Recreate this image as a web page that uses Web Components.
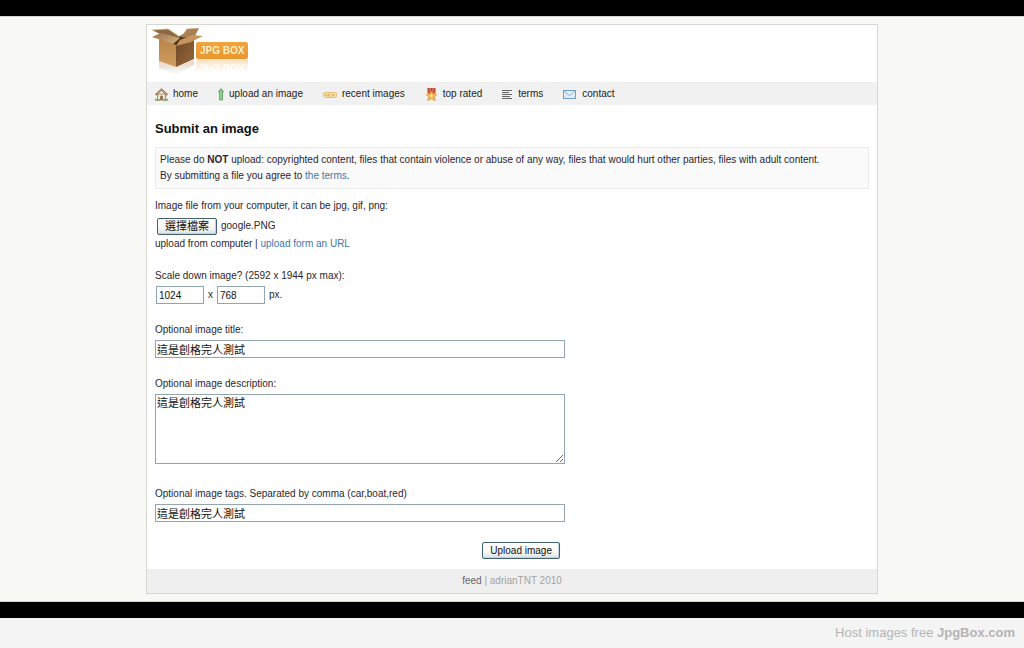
<!DOCTYPE html>
<html lang="en">
<head>
<meta charset="utf-8">
<meta name="viewport" content="width=device-width, initial-scale=1">
<title>Submit an image</title>
<style>
  body {
    margin:0;
    font-family:"Liberation Sans", Arial, "Noto Sans CJK TC", sans-serif;
    font-size:10px;
    line-height:16px;
    color:#2b2630;
    --link:#3b78a8;
    --field-border:#93a5af;
  }
</style>
</head>
<body>
<page-shell>
  <site-card>
    <site-logo slot="header"></site-logo>
    <site-nav slot="nav">
      <nav-item icon="home">home</nav-item>
      <nav-item icon="upload">upload an image</nav-item>
      <nav-item icon="recent">recent images</nav-item>
      <nav-item icon="rated">top rated</nav-item>
      <nav-item icon="terms">terms</nav-item>
      <nav-item icon="contact">contact</nav-item>
    </site-nav>
    <upload-form></upload-form>
    <site-footer slot="footer"></site-footer>
  </site-card>
  <host-credit slot="credit"></host-credit>
</page-shell>

<script>
const ICONS = {
  home: [13, `
    <rect x="2.5" y="6" width="8" height="6" fill="#efe6d2" stroke="#a39272"/>
    <path d="M.6 7L6.5 1.6L12.4 7" fill="none" stroke="#9c7450" stroke-width="2"/>
    <path d="M1.5 6.2L6.5 1.8L11.5 6.2" fill="none" stroke="#d3ab80" stroke-width=".8"/>
    <path d="M5.2 12V8.2Q6.5 6.6 7.8 8.2V12Z" fill="#8a6b48"/>
    <path d="M0 12.2H5M8 12.2H13M1 10.5V12M12 10.5V12" stroke="#7ba465" stroke-width="1.2"/>`],
  upload: [6, `
    <path d="M3 .6L5.7 3.8H4.5V12H1.5V3.8H.3Z" fill="#7cc47a" stroke="#4a9a52" stroke-width=".7"/>
    <path d="M2.8 3.2V11" stroke="#b9e2b4" stroke-width=".7"/>`],
  recent: [14, `
    <rect x=".5" y="4.5" width="13" height="5" rx="1" fill="#fbe8b8" stroke="#e6c07a"/>
    <path d="M2 8.4V5.8L4 8.4V5.8M7.3 5.9H5.4V8.2H7.3M5.4 7H7M8.5 5.6L9.3 8.3L10.2 6.2L11.1 8.3L12 5.6" fill="none" stroke="#dda650" stroke-width=".7"/>`],
  rated: [13, `
    <path d="M2.5 0H10.5V5L6.5 7L2.5 5Z" fill="#b9443a"/>
    <path d="M5 0V5M8 0V5" stroke="#e38b66" stroke-width="1"/>
    <path d="M6.5 3.2L8.1 6L11.8 6.4L9.3 8.7L10.3 12.6L6.5 10.8L2.7 12.6L3.7 8.7L1.2 6.4L4.9 6Z" fill="#f4bd52" stroke="#dd9640" stroke-width=".8"/>
    <circle cx="6.3" cy="7.8" r="1.4" fill="#ffe294"/>`],
  terms: [11, `
    <path d="M0 2.5H10M0 4.5H7M0 6.5H10M0 8.5H8M0 10.5H10" stroke="#666" stroke-width="1"/>`],
  contact: [14, `
    <rect x=".5" y="2.5" width="12" height="8" fill="#e4f1fb" stroke="#6d9fc7"/>
    <path d="M1.2 3.2L6.5 7.6L11.8 3.2" fill="none" stroke="#7fabd0"/>
    <path d="M1.2 10L4.6 6.6M11.8 10L8.4 6.6" fill="none" stroke="#b5d2e8" stroke-width=".7"/>`],
};

class PageShell extends HTMLElement {
  constructor() {
    super();
    this.attachShadow({ mode: "open" }).innerHTML = `
      <style>
        :host { display:flex; flex-direction:column; min-height:100vh; }
        main {
          flex:1;
          padding:8px;
          border-block:16px solid #000;
          background:#f8f8f4;
          box-shadow:inset 0 1px #d4d4d0, inset 0 -1px #d4d4d0;
        }
      </style>
      <main><slot></slot></main>
      <slot name="credit"></slot>
    `;
  }
}

class SiteCard extends HTMLElement {
  constructor() {
    super();
    this.attachShadow({ mode: "open" }).innerHTML = `
      <style>
        :host {
          display:block;
          box-sizing:border-box;
          max-width:732px;
          margin:0 auto;
          border:1px solid #d6d6d3;
          background:#fff;
        }
        header { display:flex; padding:3px 4px 0; height:54px; }
        .content { padding:16px 8px 10px; }
      </style>
      <header><slot name="header"></slot></header>
      <slot name="nav"></slot>
      <div class="content"><slot></slot></div>
      <slot name="footer"></slot>
    `;
  }
}

class SiteLogo extends HTMLElement {
  constructor() {
    super();
    this.attachShadow({ mode: "open" }).innerHTML = `
      <style>
        :host { display:flex; align-items:flex-start; }
        svg { display:block; margin-right:-8px; }
        .badge {
          margin-top:14px;
          padding:0 4px;
          border-radius:2px;
          background:linear-gradient(#f0a540, #ea972f);
          color:#fff0c4;
          font-weight:bold;
          line-height:17px;
          -webkit-box-reflect:below 0 linear-gradient(transparent 20%, rgba(0, 0, 0, 0.3));
        }
      </style>
      <svg width="53" height="48" viewBox="0 0 53 48" aria-hidden="true">
        <defs>
          <linearGradient id="left" x1="0" y1="0" x2="0" y2="1">
            <stop offset="0" stop-color="#b98549"/><stop offset="1" stop-color="#d09d60"/>
          </linearGradient>
          <linearGradient id="right" x1="0" y1="0" x2="1" y2="1">
            <stop offset="0" stop-color="#6e4824"/><stop offset="1" stop-color="#96683a"/>
          </linearGradient>
          <linearGradient id="flap" x1="0" y1="0" x2="1" y2="1">
            <stop offset="0" stop-color="#94704a"/><stop offset="1" stop-color="#dcb583"/>
          </linearGradient>
          <linearGradient id="floor" x1="0" y1="0" x2="0" y2="1">
            <stop offset="0" stop-color="#a77b4b" stop-opacity=".35"/>
            <stop offset="1" stop-color="#a77b4b" stop-opacity="0"/>
          </linearGradient>
        </defs>
        <path d="M8 33L25 39L43 32V37L25 47L8 40Z" fill="url(#floor)"/>
        <path d="M14 5L27 9L38 3L43 10L25 18L8 12Z" fill="#553619"/>
        <path d="M8 11L25 17V39L8 33Z" fill="url(#left)"/>
        <path d="M25 17L43 10V31L25 39Z" fill="url(#right)"/>
        <path d="M1 2L17 1L29 9L21 12Z" fill="#8d6742"/>
        <path d="M1 9L10 5L29 10L22 16Z" fill="url(#flap)"/>
        <path d="M30 9L36 1L48 0L43 10Z" fill="#a98155"/>
        <path d="M29 12L41 7L52 8L40 14L25 18Z" fill="#c59560"/>
        <path d="M1 2L17 1L29 9M30 9L36 1L48 0" fill="none" stroke="#d8b483" stroke-width=".6"/>
      </svg>
      <span class="badge">JPG BOX</span>
    `;
  }
}

class SiteNav extends HTMLElement {
  constructor() {
    super();
    this.attachShadow({ mode: "open" }).innerHTML = `
      <style>
        :host { display:block; }
        nav {
          display:flex;
          flex-wrap:wrap;
          gap:0 20px;
          padding:4px 8px 3px;
          background:#f1f1f1;
        }
      </style>
      <nav><slot></slot></nav>
    `;
  }
}

class NavItem extends HTMLElement {
  connectedCallback() {
    if (this.shadowRoot) return;
    const [width, shapes] = ICONS[this.getAttribute("icon")];
    this.attachShadow({ mode: "open" }).innerHTML = `
      <style>
        :host { display:block; }
        a { display:flex; align-items:center; gap:5px; color:#222; text-decoration:none; }
        a:hover { text-decoration:underline; }
      </style>
      <a href="#">
        <svg width="${width}" height="13" viewBox="0 0 ${width} 13" aria-hidden="true">${shapes}</svg>
        <slot></slot>
      </a>
    `;
  }
}

class NoticeBox extends HTMLElement {
  constructor() {
    super();
    this.attachShadow({ mode: "open" }).innerHTML = `
      <style>
        :host {
          display:block;
          padding:4px;
          border:1px solid #ebebeb;
          background:#fafafa;
        }
      </style>
      <slot></slot>
    `;
  }
}

class TextField extends HTMLElement {
  connectedCallback() {
    if (this.shadowRoot) return;
    const rows = this.getAttribute("rows");
    const control = rows
      ? `<textarea id="control" rows="${rows}"></textarea>`
      : `<input id="control" type="text">`;
    this.attachShadow({ mode: "open" }).innerHTML = `
      <style>
        :host { display:block; }
        label { display:block; margin-bottom:2px; }
        input, textarea {
          display:block;
          box-sizing:border-box;
          width:100%;
          max-width:410px;
          margin:0 0 2px;
          padding:0 1px;
          border:1px solid var(--field-border);
          background:#fff;
          color:#111;
          font-family:inherit;
          font-size:11px;
          line-height:16px;
        }
        input { height:18px; }
        textarea { height:70px; margin-bottom:6px; resize:both; }
      </style>
      <label for="control"></label>
      ${control}
    `;
    this.shadowRoot.querySelector("label").textContent = this.getAttribute("label");
    this.shadowRoot.querySelector("#control").value = this.getAttribute("value") || "";
  }
}

class XpButton extends HTMLElement {
  constructor() {
    super();
    this.attachShadow({ mode: "open" }).innerHTML = `
      <style>
        :host { display:inline-block; }
        button {
          display:block;
          height:17px;
          padding:0 7px;
          border:1px solid #42606f;
          border-radius:2px;
          background:linear-gradient(#fff, #f4f5f3 65%, #d9e0e5);
          box-shadow:inset -1px -1px #c3d2dd;
          color:#111;
          font-family:inherit;
          font-size:var(--button-size, 11px);
          line-height:15px;
          cursor:pointer;
        }
        button:active { background:#e3e6e6; }
      </style>
      <button type="button"><slot></slot></button>
    `;
  }
}

class FilePicker extends HTMLElement {
  constructor() {
    super();
    this.attachShadow({ mode: "open" }).innerHTML = `
      <style>
        :host { display:block; }
        label { display:block; margin-bottom:2px; }
        .row { display:flex; align-items:center; gap:4px; height:20px; padding-left:2px; }
        .name { line-height:20px; }
        a { color:var(--link); text-decoration:none; }
      </style>
      <label for="file">Image file from your computer, it can be jpg, gif, png:</label>
      <input id="file" type="file" accept="image/jpeg,image/gif,image/png" hidden>
      <div class="row">
        <xp-button>選擇檔案</xp-button>
        <span class="name">google.PNG</span>
      </div>
      <div>upload from computer | <a href="#">upload form an URL</a></div>
    `;
    const input = this.shadowRoot.querySelector("#file");
    this.shadowRoot.querySelector("xp-button").addEventListener("click", () => input.click());
    input.addEventListener("change", () => {
      if (input.files[0]) this.shadowRoot.querySelector(".name").textContent = input.files[0].name;
    });
  }
}

class ScaleField extends HTMLElement {
  constructor() {
    super();
    this.attachShadow({ mode: "open" }).innerHTML = `
      <style>
        :host { display:block; }
        label { display:block; margin-bottom:2px; }
        .row { display:flex; align-items:center; gap:4px; padding:0 1px 2px; }
        input {
          box-sizing:border-box;
          width:48px;
          height:18px;
          margin:0;
          padding:0 2px;
          border:1px solid var(--field-border);
          background:#fff;
          color:#111;
          font-family:inherit;
          font-size:10px;
        }
      </style>
      <label for="width">Scale down image? (2592 x 1944 px max):</label>
      <div class="row">
        <input id="width" type="text" value="1024">
        <span>x</span>
        <input id="height" type="text" value="768" aria-label="Height">
        <span>px.</span>
      </div>
    `;
  }
}

class UploadForm extends HTMLElement {
  constructor() {
    super();
    this.attachShadow({ mode: "open" }).innerHTML = `
      <style>
        :host { display:block; }
        h1 { margin:0 0 10px; font-size:13px; line-height:16px; color:#111; }
        a { color:var(--link); text-decoration:none; }
        form { display:grid; gap:16px; margin-top:9px; }
        .actions { display:flex; justify-content:flex-end; box-sizing:border-box; max-width:405px; padding-top:2px; }
        .actions xp-button { --button-size:10px; }
      </style>
      <h1>Submit an image</h1>
      <notice-box>
        Please do <b>NOT</b> upload: copyrighted content, files that contain violence or abuse of any way, files that would hurt other parties, files with adult content.<br>
        By submitting a file you agree to <a href="#">the terms</a>.
      </notice-box>
      <form>
        <file-picker></file-picker>
        <scale-field></scale-field>
        <text-field label="Optional image title:" value="這是創格完人測試"></text-field>
        <text-field label="Optional image description:" value="這是創格完人測試" rows="4"></text-field>
        <text-field label="Optional image tags. Separated by comma (car,boat,red)" value="這是創格完人測試"></text-field>
        <div class="actions"><xp-button>Upload image</xp-button></div>
      </form>
    `;
  }
}

class SiteFooter extends HTMLElement {
  constructor() {
    super();
    this.attachShadow({ mode: "open" }).innerHTML = `
      <style>
        :host { display:block; }
        footer { padding:4px; background:#efefef; color:#a3a3a3; text-align:center; }
        a { color:#666; text-decoration:none; }
      </style>
      <footer><a href="#">feed</a> | adrianTNT 2010</footer>
    `;
  }
}

class HostCredit extends HTMLElement {
  constructor() {
    super();
    this.attachShadow({ mode: "open" }).innerHTML = `
      <style>
        :host {
          display:block;
          padding:7px 9px;
          background:#f4f4f4;
          color:#b5b5b5;
          font-size:13px;
          text-align:right;
        }
        a { color:inherit; text-decoration:none; }
      </style>
      Host images free <a href="#"><b>JpgBox.com</b></a>
    `;
  }
}

customElements.define("page-shell", PageShell);
customElements.define("site-card", SiteCard);
customElements.define("site-logo", SiteLogo);
customElements.define("site-nav", SiteNav);
customElements.define("nav-item", NavItem);
customElements.define("notice-box", NoticeBox);
customElements.define("text-field", TextField);
customElements.define("xp-button", XpButton);
customElements.define("file-picker", FilePicker);
customElements.define("scale-field", ScaleField);
customElements.define("upload-form", UploadForm);
customElements.define("site-footer", SiteFooter);
customElements.define("host-credit", HostCredit);
</script>
</body>
</html>
